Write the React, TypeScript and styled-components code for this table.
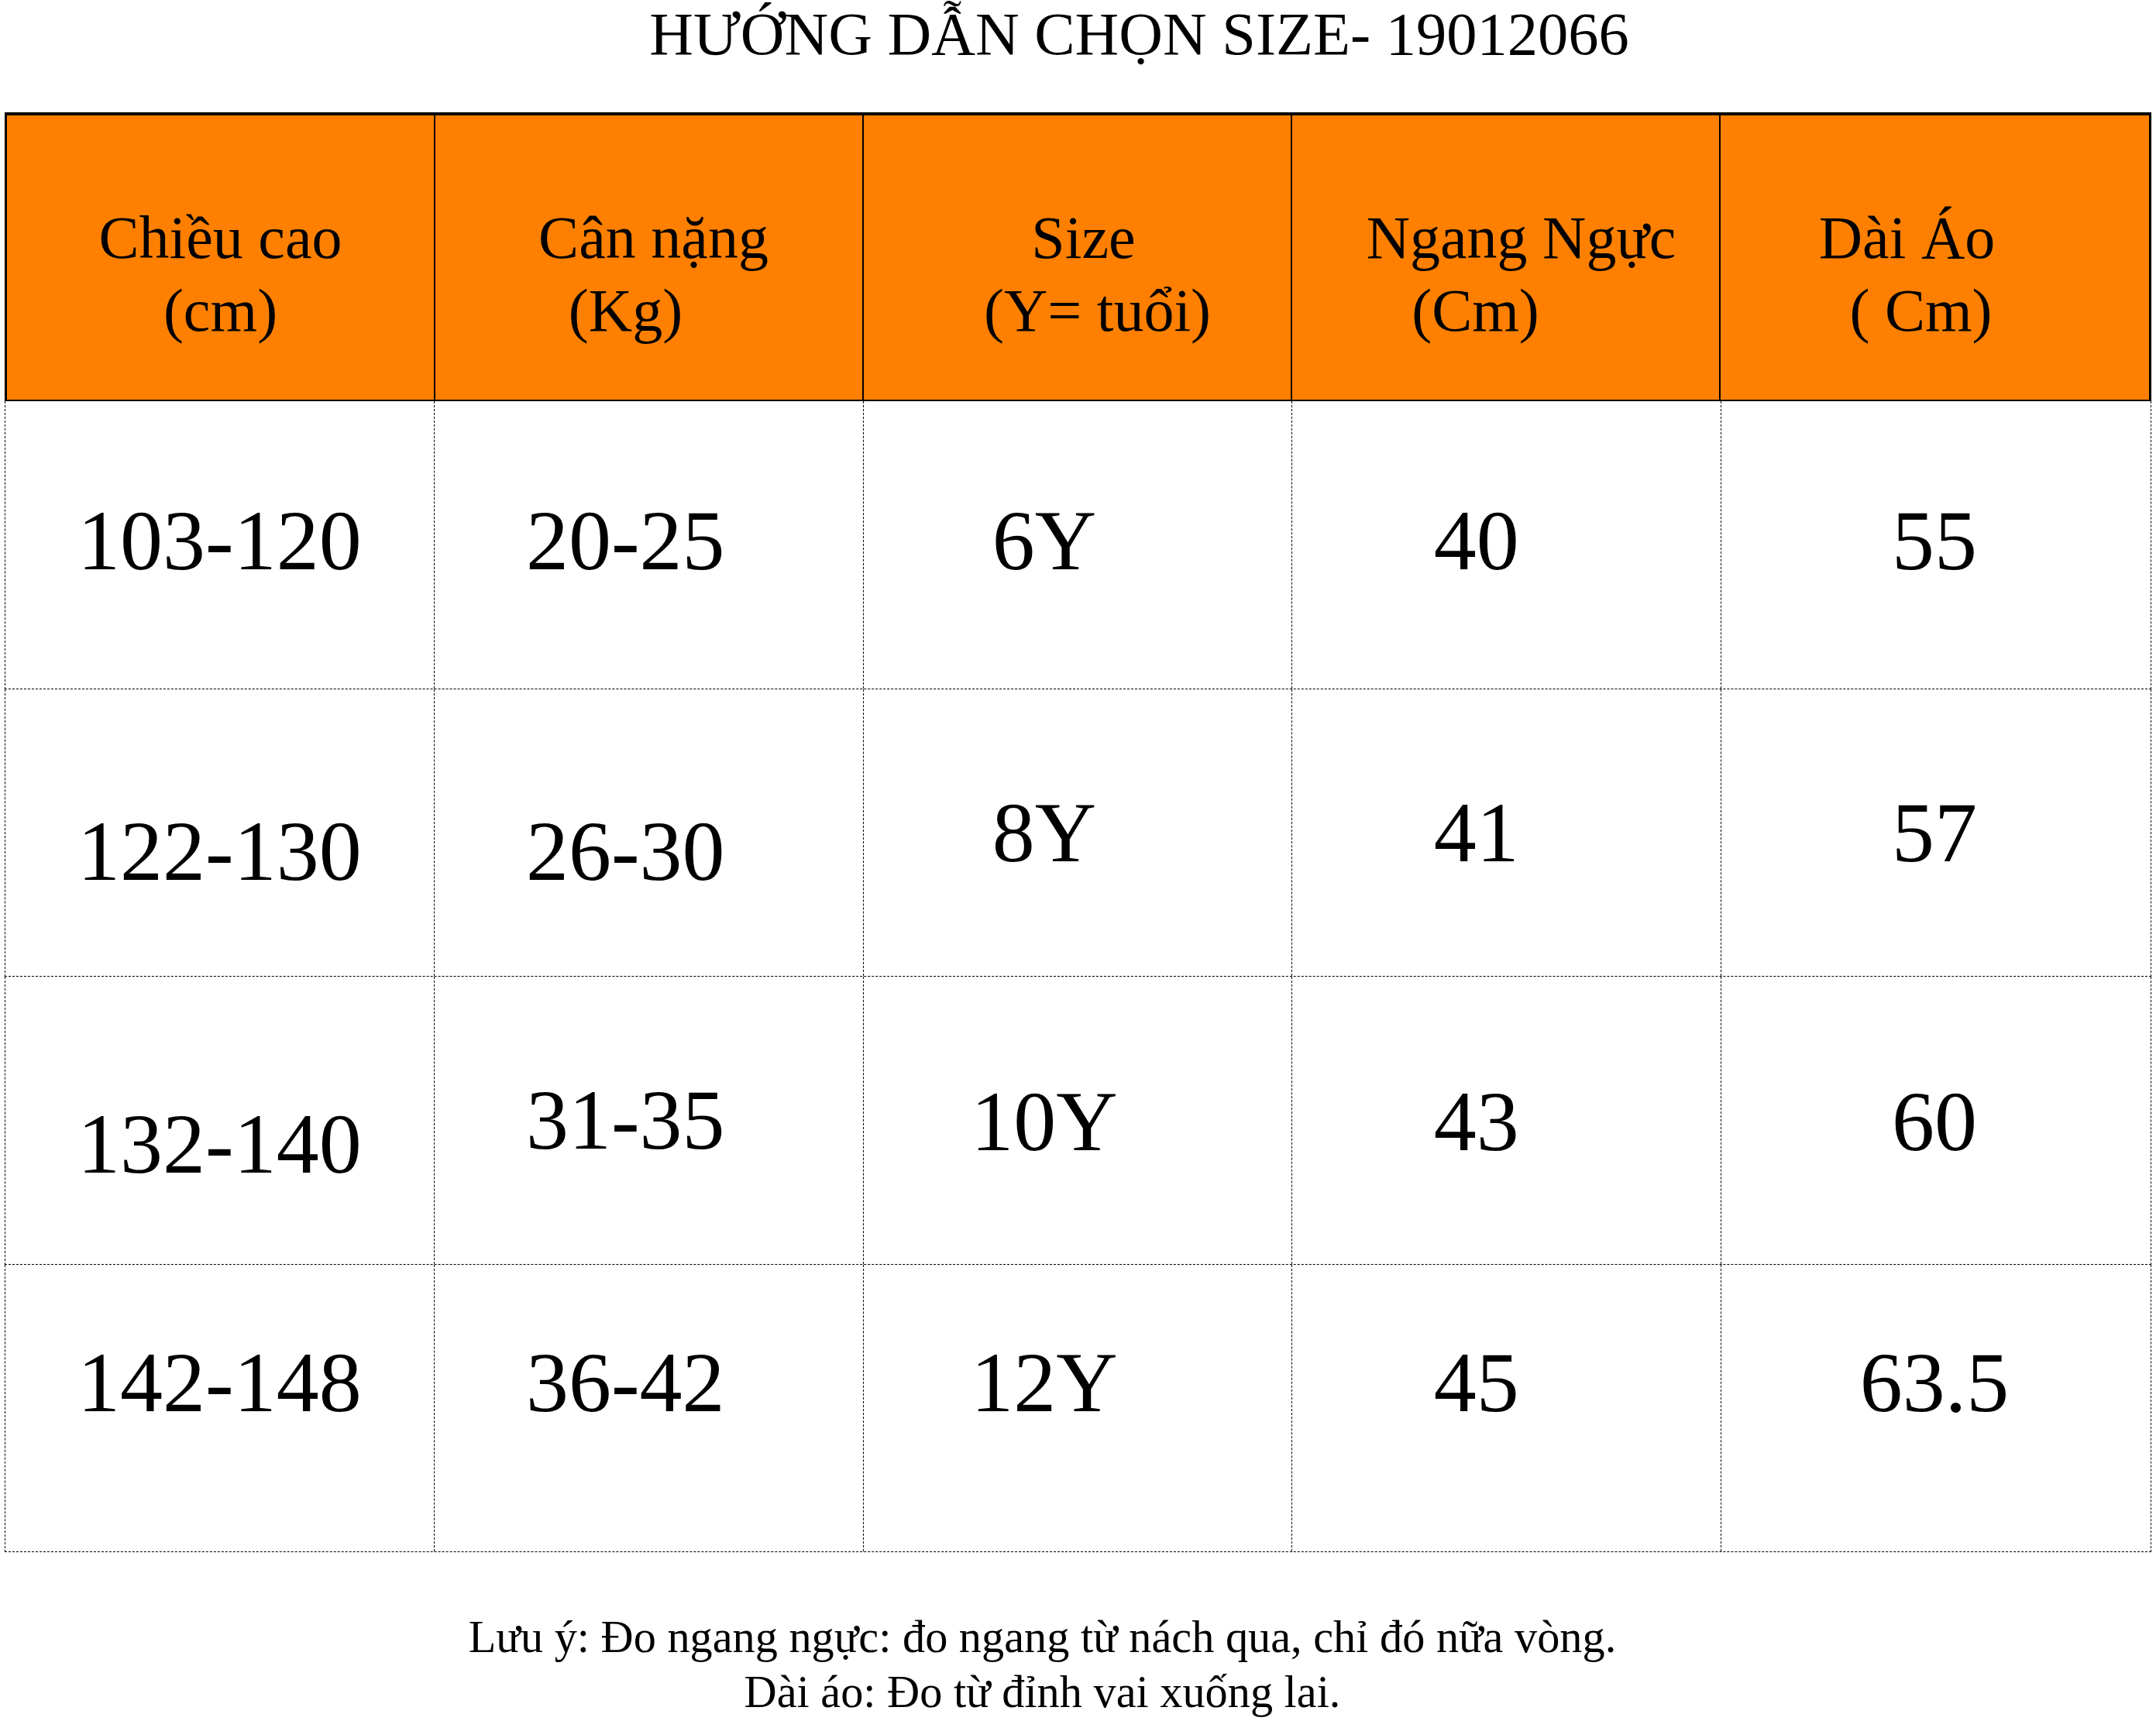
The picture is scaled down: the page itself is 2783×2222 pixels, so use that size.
import styled, { createGlobalStyle } from 'styled-components';

const GlobalStyle = createGlobalStyle`
  html, body {
    margin: 0;
    padding: 0;
    background: #fff;
  }
  body {
    font-family: "Liberation Serif", "Times New Roman", serif;
    color: #000;
  }
`;

type HeadLine = [string, number];

const headers: HeadLine[][] = [
  [['Chiều cao', 0], ['(cm)', 0]],
  [['Cân nặng', 6], ['(Kg)', -30]],
  [['Size', 8], ['(Y= tuổi)', 26]],
  [['Ngang Ngực', 20], ['(Cm)', -39]],
  [['Dài Áo', -36], ['( Cm)', -18]],
];

// horizontal nudge per column, vertical nudge per cell (the source sheet is not quite centred)
const columnShift = [0, -30, -43, -39, -2];

const rows: { values: string[]; dy: number[] }[] = [
  { values: ['103-120', '20-25', '6Y', '40', '55'], dy: [-5, -5, -5, -5, -5] },
  { values: ['122-130', '26-30', '8Y', '41', '57'], dy: [24, 24, 0, 0, 0] },
  { values: ['132-140', '31-35', '10Y', '43', '60'], dy: [31, 0, 2, 2, 2] },
  { values: ['142-148', '36-42', '12Y', '45', '63.5'], dy: [-33, -33, -33, -33, -33] },
];

const App = () => {
  return (
    <Page>
      <GlobalStyle />
      <Title>HƯỚNG DẪN CHỌN SIZE- 19012066</Title>
      <Table>
        <HeaderRow>
          {headers.map((lines, i) => (
            <HeaderCell key={i}>
              {lines.map(([text, dx]) => (
                <HeaderText key={text} $dx={dx}>
                  {text}
                </HeaderText>
              ))}
            </HeaderCell>
          ))}
        </HeaderRow>
        {rows.map((row, r) => (
          <BodyRow key={r}>
            {row.values.map((value, c) => (
              <BodyCell key={c} $dx={columnShift[c]} $dy={row.dy[c]}>
                {value}
              </BodyCell>
            ))}
          </BodyRow>
        ))}
      </Table>
      <Note>
        <NoteLine>Lưu ý: Đo ngang ngực: đo ngang từ nách qua, chỉ đó nữa vòng.</NoteLine>
        <NoteLine>Dài áo: Đo từ đỉnh vai xuống lai.</NoteLine>
      </Note>
    </Page>
  );
};

const Page = styled.div`
  width: 2771px;
  padding-left: 6px;
  display: flex;
  flex-direction: column;
`;

const Title = styled.h1`
  margin: 0 0 57px;
  padding-left: 158px;
  font-size: 78.5px;
  font-weight: normal;
  line-height: 88px;
  text-align: center;
  white-space: nowrap;
`;

const Table = styled.div`
  display: flex;
  flex-direction: column;
`;

const HeaderRow = styled.div`
  display: grid;
  grid-template-columns: repeat(5, 1fr);
  height: 373px;
  box-sizing: border-box;
  background: #ff8000;
  border-top: 4px solid #000;
  border-left: 3px solid #000;
  border-right: 3px solid #000;
  border-bottom: 2px solid #000;
`;

const HeaderCell = styled.div`
  display: flex;
  flex-direction: column;
  justify-content: center;
  padding-top: 43px;
  border-right: 2px solid #000;
  &:last-child {
    border-right: none;
  }
`;

const HeaderText = styled.div<{ $dx: number }>`
  font-size: 78px;
  line-height: 94px;
  text-align: center;
  white-space: pre;
  padding-left: ${({ $dx }) => Math.max(0, $dx * 2)}px;
  padding-right: ${({ $dx }) => Math.max(0, -$dx * 2)}px;
`;

const BodyRow = styled.div`
  display: grid;
  grid-template-columns: repeat(5, 1fr);
  height: 371.5px;
  box-sizing: border-box;
  border-left: 1px dashed #000;
  border-right: 1px dashed #000;
  border-bottom: 1px dashed #000;
`;

const BodyCell = styled.div<{ $dx: number; $dy: number }>`
  display: flex;
  align-items: center;
  justify-content: center;
  font-size: 110px;
  line-height: 124px;
  border-right: 1px dashed #000;
  padding-left: ${({ $dx }) => Math.max(0, $dx * 2)}px;
  padding-right: ${({ $dx }) => Math.max(0, -$dx * 2)}px;
  padding-top: ${({ $dy }) => Math.max(0, $dy * 2)}px;
  padding-bottom: ${({ $dy }) => Math.max(0, -$dy * 2)}px;
  &:last-child {
    border-right: none;
  }
`;

const Note = styled.div`
  margin-top: 74px;
  padding-right: 92px;
  display: flex;
  flex-direction: column;
  align-items: center;
`;

const NoteLine = styled.div`
  font-size: 58.3px;
  line-height: 71px;
  white-space: nowrap;
`;

export default App;
